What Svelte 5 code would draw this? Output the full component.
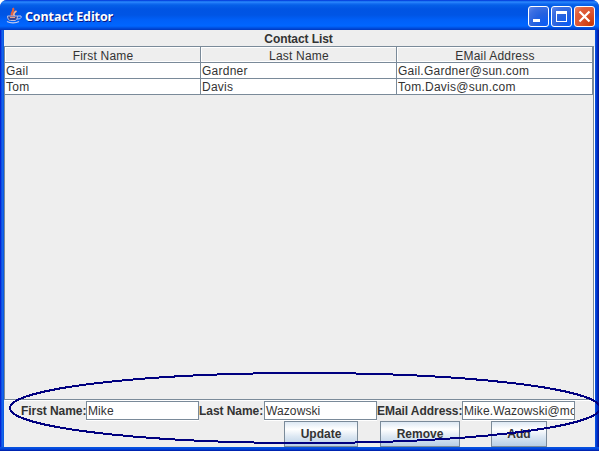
<script>
  const columns = ['First Name', 'Last Name', 'EMail Address'];
  const contacts = [
    ['Gail', 'Gardner', 'Gail.Gardner@sun.com'],
    ['Tom', 'Davis', 'Tom.Davis@sun.com']
  ];
  const fields = [
    { label: 'First Name:', value: 'Mike', kind: 'first' },
    { label: 'Last Name:', value: 'Wazowski', kind: 'last' },
    { label: 'EMail Address:', value: 'Mike.Wazowski@mo', kind: 'email' }
  ];
</script>

<div class="window">
  <header class="titlebar">
    <svg class="java" width="17" height="18" viewBox="0 0 17 18" fill="none">
      <path d="M6.500 9C3.500 6.500 9 4.500 7 1" stroke="#e8603c" stroke-width="2.200" />
      <path d="M8.500 9C7 7 8 5.500 10.500 4" stroke="#ffb890" stroke-width="1.600" />
      <path d="M1.500 9h10c0 3-1.500 4.500-2.500 4.500H4.500C3 13.500 1.500 12 1.500 9z" fill="#3c468e" stroke="#b4bbe5" />
      <path d="M11.500 9h3.500c.8 2-.8 3-4 3" stroke="#c2c8ed" />
      <path d="M4 10.500h5" stroke="#e8a090" />
      <path d="M1 14.500c3 1.800 9 1.800 12 0" stroke="#c2c8ed" stroke-width="1.400" />
    </svg>
    <h1>Contact Editor</h1>
    <div class="controls">
      <button class="ctl" aria-label="Minimize"><svg width="19" height="19" viewBox="0 0 19 19"><path d="M4 12h7v3H4z" fill="#fff" /></svg></button>
      <button class="ctl" aria-label="Maximize"><svg width="19" height="19" viewBox="0 0 19 19"><path d="M4 4h11v11H4zM5 7v7h9V7z" fill="#fff" fill-rule="evenodd" /></svg></button>
      <button class="ctl close" aria-label="Close"><svg width="19" height="19" viewBox="0 0 19 19"><path d="M4.500 4.500l10 10M14.500 4.500l-10 10" stroke="#fff" stroke-width="2.200" /></svg></button>
    </div>
  </header>

  <main>
    <h2>Contact List</h2>
    <section class="scroll">
      <div class="row head">
        {#each columns as column}<div class="cell"><span>{column}</span></div>{/each}
      </div>
      {#each contacts as contact}
        <div class="row">
          {#each contact as value}<div class="cell"><span>{value}</span></div>{/each}
        </div>
      {/each}
    </section>
    <div class="form">
      {#each fields as field}
        <div class="label {field.kind}"><span>{field.label}</span></div>
        <div class="field {field.kind}"><span>{field.value}</span></div>
      {/each}
    </div>
    <div class="actions">
      <button class="update">Update</button>
      <button class="remove">Remove</button>
      <button class="add">Add</button>
    </div>
  </main>

  <svg class="callout" width="600" height="451" viewBox="0 0 600 451" shape-rendering="crispEdges">
    <ellipse cx="305" cy="408" rx="295" ry="35" fill="none" stroke="#000080" stroke-width="2" />
  </svg>
</div>

<style>
  :global(body) { margin: 0; background: #fff; }
  .window {
    position: relative; box-sizing: border-box; width: 599px; height: 451px;
    display: flex; flex-direction: column; overflow: hidden;
    border-radius: 7px 7px 0 0; color: #333;
    background:
      linear-gradient(180deg, #0855dd 0, #0046e0 2px, #0019a0 4px) 0 100% / 100% 4px no-repeat,
      linear-gradient(90deg, #0019cf 0, #0831d9 1px, #166aee 2px, #0855dd 4px, #0855dd 595px, #0046e0 596px, #0030c8 597px, #001590 599px);
    font: 12px/16px "Liberation Sans", Arial, sans-serif;
  }
  .titlebar {
    height: 30px; flex: none; box-sizing: border-box; display: flex; align-items: flex-start;
    padding: 6px 4px 0 6px;
    background: linear-gradient(180deg, #0831d9 0, #0a5fe8 1px, #2f8cff 2px, #1a74f5 3px, #0560e8 5px, #0054e3 9px, #0055e5 15px, #0060f8 20px, #0066ff 26px, #005bef 27px, #0043cf 29px, #0038bd 30px);
  }
  .java { margin-top: 1px; flex: none; }
  h1 {
    flex: 1; margin: 2px 0 0 2px; color: #fff; font: 700 12.500px/18px "Open Sans", sans-serif;
    text-shadow: 1px 1px 0 #0a1883; white-space: nowrap; letter-spacing: -0.100px;
  }
  .controls { display: flex; gap: 2px; }
  .ctl {
    box-sizing: border-box; width: 21px; height: 21px; padding: 0; border: 1px solid #fff; border-radius: 3px;
    background: radial-gradient(circle at 85% 90%, #0b5cf5 0, #2561df 45%, #3c6fe2 75%, #6288ea 100%);
    display: flex;
  }
  .ctl svg { display: block; }
  .close { background: radial-gradient(circle at 85% 90%, #c93a08 0, #dc5431 50%, #e0603c 75%, #ea8a70 100%); }
  main { flex: 1; min-height: 0; margin: 0 4px 4px; background: #eee; display: flex; flex-direction: column; overflow: hidden; }
  h2 { margin: 0; height: 16px; flex: none; text-align: center; font: 700 12px/18px "Liberation Sans", Arial, sans-serif; padding-right: 2px; letter-spacing: -0.080px; }
  .scroll {
    height: 354px; flex: none; box-sizing: border-box; width: 590px;
    border: 1px solid #7a8a99; box-shadow: 1px 1px 0 #fff;
  }
  .row { display: flex; height: 16px; width: 588px; background: #fff; }
  .cell { box-sizing: border-box; width: 196px; padding-left: 1px; border: solid #7a8a99; border-width: 0 1px 1px 0; line-height: 17px; letter-spacing: 0.250px; white-space: nowrap; }
  .head .cell { background: #eee; text-align: center; box-shadow: inset 1px 1px 0 #fff, inset 0 -1px 0 #fff; padding: 0 0 0 1px; line-height: 18px; letter-spacing: 0.200px; }
  .form { display: flex; height: 21px; flex: none; padding: 1px 0 0 17px; box-sizing: border-box; }
  .label { font-weight: 700; line-height: 21px; white-space: nowrap; height: 20px; letter-spacing: -0.060px; }
  .label.first { width: 65px; }
  .label.last { width: 65px; }
  .label.email { width: 85px; }
  .field {
    box-sizing: border-box; width: 113px; height: 19px; border: 1px solid #7a8a99; background: #fff;
    box-shadow: 0 1px 0 #fff; line-height: 19px; padding-left: 1px; overflow: hidden; white-space: nowrap; letter-spacing: 0.100px;
  }
  .actions { display: flex; padding-left: 280px; height: 26px; }
  .actions button {
    box-sizing: border-box; height: 26px; flex: none; padding: 1px 0 0; border: 1px solid #7a8a99; color: #333;
    background: linear-gradient(180deg, #dde8f3 0, #fff 30%, #dde8f3 60%, #b8cfe5 100%);
    font: 700 12px/23px "Liberation Sans", Arial, sans-serif;
  }
  .update { width: 74px; }
  .remove { width: 80px; margin-left: 22px; }
  .add { width: 56px; margin-left: 31px; }
  .callout { position: absolute; left: 0; top: 0; pointer-events: none; }
</style>
